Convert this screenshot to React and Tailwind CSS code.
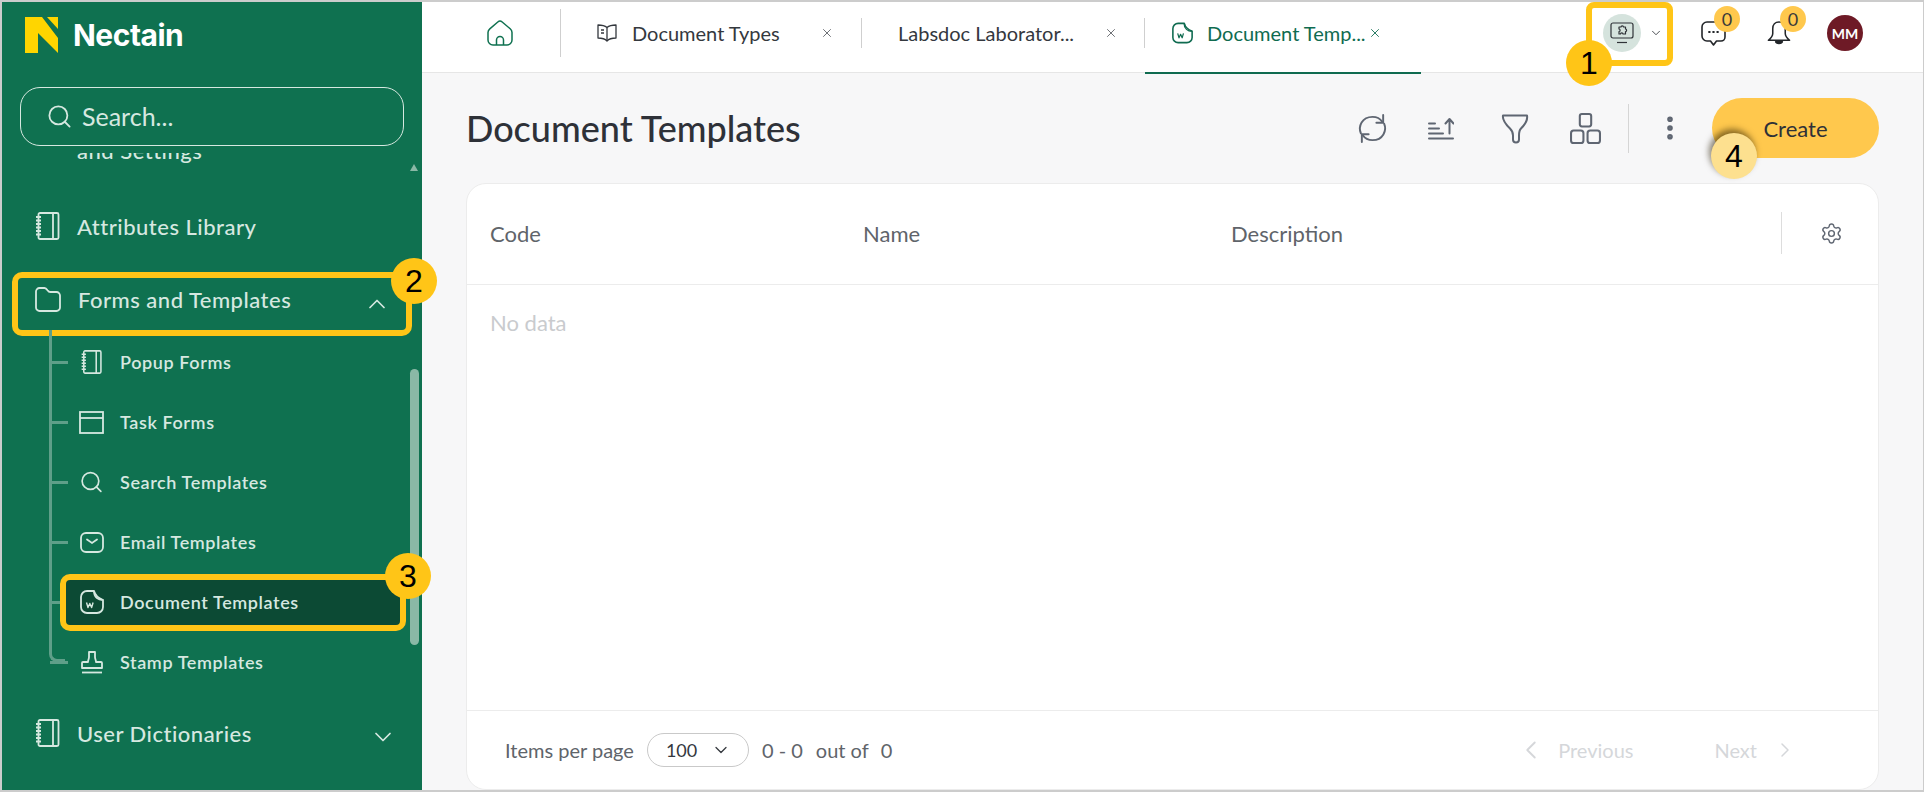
import React from 'react';
import { ChevronDown, ChevronUp, ChevronLeft, ChevronRight, X, Search, EllipsisVertical, Settings } from 'lucide-react';

const NotebookIcon = ({ className }) => (
  <svg className={className} viewBox="0 0 25 28" fill="none" stroke="currentColor" strokeWidth="1.8" strokeLinejoin="round">
    <rect x="3.5" y="1" width="20" height="26" rx="1.5" />
    <path d="M18 1v26" />
    <path d="M1 5h5M1 8.500h5M1 12h5M1 15.500h5M1 19h5M1 22.500h5" />
  </svg>
);

const FolderIcon = ({ className }) => (
  <svg className={className} viewBox="0 0 26 26" fill="none" stroke="currentColor" strokeWidth="1.8" strokeLinejoin="round">
    <path d="M1 5.500A3.500 3.500 0 0 1 4.500 2h5c1.500 0 2.200 1 3 2.200.7 1 1.300 1.800 2.800 1.800h6.200A3.500 3.500 0 0 1 25 9.500v12a3.500 3.500 0 0 1-3.500 3.500h-17A3.500 3.500 0 0 1 1 21.500z" />
  </svg>
);

const WindowIcon = ({ className }) => (
  <svg className={className} viewBox="0 0 25 23" fill="none" stroke="currentColor" strokeWidth="1.8">
    <rect x="1" y="1" width="23" height="21" />
    <path d="M1 7h23" />
  </svg>
);

const MailIcon = ({ className }) => (
  <svg className={className} viewBox="0 0 24 21" fill="none" stroke="currentColor" strokeWidth="1.8" strokeLinecap="round">
    <rect x="1" y="1" width="22" height="19" rx="5" />
    <path d="M7 7.500l5 3.500 5-3.500" />
  </svg>
);

const DocWordIcon = ({ className }) => (
  <svg className={className} viewBox="0 0 24 24" fill="none" stroke="currentColor" strokeWidth="1.8" strokeLinejoin="round">
    <path d="M14 1H7a6 6 0 0 0-6 6v10a6 6 0 0 0 6 6h10a6 6 0 0 0 6-6v-7c-5 0-9-3-9-9z" />
    <path d="M14 1c1 4 4 7 9 9" />
    <path d="M6.500 12.500l1.500 5 1.800-4 1.800 4 1.500-5" strokeWidth="1.400" />
  </svg>
);

const StampIcon = ({ className }) => (
  <svg className={className} viewBox="0 0 22 23" fill="none" stroke="currentColor" strokeWidth="1.8" strokeLinejoin="round">
    <path d="M8 1h6v5c0 2 1 3 1 5h5a1 1 0 0 1 1 1v5H1v-5a1 1 0 0 1 1-1h5c0-2 1-3 1-5z" />
    <path d="M1 21.500h20" />
  </svg>
);

const HomeIcon = ({ className }) => (
  <svg className={className} viewBox="0 0 26 26" fill="none" stroke="currentColor" strokeWidth="1.500" strokeLinejoin="round">
    <path d="M1 12.500c0-1.500.6-2.700 1.800-3.700l8-6.800a3.400 3.400 0 0 1 4.400 0l8 6.800c1.200 1 1.800 2.200 1.800 3.700V20a5 5 0 0 1-5 5H6a5 5 0 0 1-5-5z" />
    <path d="M9.500 25v-5a3.500 3.500 0 0 1 7 0v5" />
  </svg>
);

const BookIcon = ({ className }) => (
  <svg className={className} viewBox="0 0 20 18" fill="none" stroke="currentColor" strokeWidth="1.300" strokeLinejoin="round">
    <path d="M10 3.500C8 1.800 4.500 1 1 1v13c3.500 0 7 .8 9 3 2-2.200 5.500-3 9-3V1c-3.500 0-7 .8-9 2.500z" />
    <path d="M10 3.500V17M4 6h3M4 9h3" />
  </svg>
);

const DesktopPluginIcon = ({ className }) => (
  <svg className={className} viewBox="0 0 24 22" fill="none" stroke="currentColor" strokeWidth="1.200" strokeLinejoin="round">
    <rect x="1" y="1" width="22" height="15" rx="2" />
    <path d="M7 20.500h10" />
    <path d="M9 5h2c0-1.500 2.500-1.500 2.500 0h2v2c1.500 0 1.500 2.500 0 2.500v2.500h-2.500c0-1.500-2.500-1.500-2.500 0H9V9.500c1.500 0 1.500-2.500 0-2.500z" />
  </svg>
);

const ChatIcon = ({ className }) => (
  <svg className={className} viewBox="0 0 25 25" fill="none" stroke="currentColor" strokeWidth="1.600" strokeLinejoin="round">
    <path d="M6 1h13a5 5 0 0 1 5 5v10a4 4 0 0 1-4 4h-4.500l-3 4-3-4H6a5 5 0 0 1-5-5V6a5 5 0 0 1 5-5z" />
    <path d="M8 11h.8M12.100 11h.8M16.200 11h.8" strokeWidth="1.800" strokeLinecap="round" />
  </svg>
);

const BellIcon = ({ className }) => (
  <svg className={className} viewBox="0 0 24 26" fill="none" stroke="currentColor" strokeWidth="1.600" strokeLinejoin="round">
    <path d="M12 1c-4 0-6.500 3-6.500 7v5c0 2.500-1.500 4.500-4.500 7h22c-3-2.500-4.500-4.500-4.500-7V8c0-4-2.500-7-6.500-7z" />
    <path d="M8.500 21.500c.5 2.500 6.500 2.500 7 0z" fill="currentColor" />
  </svg>
);

const RefreshIcon = ({ className }) => (
  <svg className={className} viewBox="0 0 32 32" fill="none" stroke="currentColor" strokeWidth="2" strokeLinecap="round" strokeLinejoin="round">
    <path d="M4 21C1 14 5 4 16 4c4 0 8 2 10 5" />
    <path d="M28 11c3 7-1 17-12 17-4 0-8-2-10-5" />
    <path d="M27 2v8h-7M5 30v-8h7" />
  </svg>
);

const SortIcon = ({ className }) => (
  <svg className={className} viewBox="0 0 26 22" fill="none" stroke="currentColor" strokeWidth="2" strokeLinecap="round" strokeLinejoin="round">
    <path d="M1 6h6M1 11h10M1 16h14M1 21h24" />
    <path d="M21.500 16V2M17.500 6l4-4.500 4 4.500" />
  </svg>
);

const FunnelIcon = ({ className }) => (
  <svg className={className} viewBox="0 0 28 30" fill="none" stroke="currentColor" strokeWidth="2" strokeLinejoin="round">
    <path d="M2 2h24c1 5-3 10-6 13-2 2-2 4-2 7v4c0 4-6 4-6 0v-4c0-3-1-5-3-7C6 12 1 7 2 2z" />
    <path d="M4 7h20" strokeWidth="0" />
  </svg>
);

const BlocksIcon = ({ className }) => (
  <svg className={className} viewBox="0 0 30 30" fill="none" stroke="currentColor" strokeWidth="2">
    <rect x="9.500" y="1" width="11" height="12" rx="2" />
    <rect x="1" y="17" width="12" height="12" rx="2.500" />
    <rect x="17" y="17" width="12" height="12" rx="2.500" />
  </svg>
);

const Marker = ({ n, className }) => (
  <span className={`absolute flex items-center justify-center w-[46px] h-[46px] rounded-full bg-[#ffc517] text-black text-[32px] font-['Liberation_Sans',sans-serif] ${className}`}>
    {n}
  </span>
);

const childRows = [
  { label: 'Popup Forms', icon: <NotebookIcon className="w-[23px] h-[24px]" /> },
  { label: 'Task Forms', icon: <WindowIcon className="w-[25px] h-[23px]" /> },
  { label: 'Search Templates', icon: <Search className="w-[26px] h-[26px]" strokeWidth={1.6} /> },
  { label: 'Email Templates', icon: <MailIcon className="w-[24px] h-[21px]" /> },
  { label: 'Document Templates', icon: <DocWordIcon className="w-[24px] h-[24px]" />, active: true },
  { label: 'Stamp Templates', icon: <StampIcon className="w-[22px] h-[23px]" /> },
];

const Tab = ({ icon, label, width, active }) => (
  <div className={`flex items-center h-full ${width}`}>
    {icon}
    <span className={`text-[20px] whitespace-nowrap ${active ? 'text-[#0f6b50]' : 'text-[#34383e]'}`}>{label}</span>
  </div>
);

export default function App() {
  return (
    <div className="relative flex w-[1924px] h-[792px] overflow-hidden border-t-2 border-l-2 border-b-2 border-r border-[#cccccc] bg-[#f7f7f8] font-['Lato',sans-serif]">
      {/* sidebar */}
      <aside className="relative flex flex-col w-[420px] shrink-0 bg-[#0f7150] text-[#d6e8e0]">
        <div className="flex items-center h-[51px] pl-[23px] pt-[15px] shrink-0">
          <svg className="w-[33px] h-[36px]" viewBox="0 0 33 36" fill="#ffd500">
            <path d="M0 0h17l16 21v15L13 16v20H0z" />
            <path d="M22 0h11v12z" />
          </svg>
          <span className="ml-[15px] text-[30px] font-bold tracking-[-0.5px] text-white font-['Inter',sans-serif]">Nectain</span>
        </div>
        <div className="flex items-center h-[59px] mt-[34px] mx-[18px] pl-[25px] rounded-[20px] border border-[#d6e8e0] shrink-0">
          <Search className="w-[27px] h-[27px]" strokeWidth={1.6} />
          <span className="ml-[9px] text-[25px]">Search...</span>
        </div>

        <div className="flex-1 mt-[7px] overflow-hidden">
          <div className="h-[43px] pl-[75px] overflow-hidden">
            <div className="-mt-[19px] text-[22px] font-medium tracking-[0.5px]">and Settings</div>
          </div>
          <div className="flex items-center h-[60px] pl-[33px]">
            <NotebookIcon className="w-[25px] h-[28px]" />
            <span className="ml-[17px] text-[22px] font-medium tracking-[0.5px]">Attributes Library</span>
          </div>

          <div className="flex items-center h-[64px] mt-[16px] mx-[10px] pl-[17px] pr-[15px] pb-[10px] rounded-[10px] border-[6px] border-[#ffc517]">
            <FolderIcon className="w-[26px] h-[26px]" />
            <span className="ml-[17px] text-[22px] font-medium tracking-[0.5px]">Forms and Templates</span>
            <ChevronUp className="ml-auto mt-[10px] w-[28px] h-[28px]" strokeWidth={1.5} />
          </div>

          <div className="relative -mt-[4px] pl-[47px]">
            <span className="absolute left-[47px] -top-[2px] w-[16px] h-[332px] border-l-[3px] border-b-[3px] rounded-bl-[8px] border-[#5f9f89]" />
            {childRows.map((row) => (
              <div key={row.label} className="flex items-center h-[60px]">
                <span className="w-[18px] h-[3px] ml-[1px] bg-[#5f9f89]" />
                {row.active ? (
                  <div className="flex items-center w-[346px] h-[57px] -ml-[8px] pl-[13px] rounded-[10px] border-[6px] border-[#ffc517] bg-[#0c4a34]">
                    <span className="flex justify-center w-[25px]">{row.icon}</span>
                    <span className="ml-[16px] text-[18px] font-semibold tracking-[0.6px]">{row.label}</span>
                  </div>
                ) : (
                  <>
                    <span className="flex justify-center w-[25px] ml-[11px]">{row.icon}</span>
                    <span className="ml-[16px] text-[18px] font-semibold tracking-[0.6px]">{row.label}</span>
                  </>
                )}
              </div>
            ))}
          </div>

          <div className="flex items-center h-[60px] mt-[11px] pl-[33px] pr-[25px]">
            <NotebookIcon className="w-[25px] h-[28px]" />
            <span className="ml-[17px] text-[22px] font-medium tracking-[0.5px]">User Dictionaries</span>
            <ChevronDown className="ml-auto mt-[8px] w-[28px] h-[28px]" strokeWidth={1.5} />
          </div>
        </div>

        {/* scrollbar */}
        <span className="absolute left-[408px] top-[162px] w-0 h-0 border-x-[4.500px] border-x-transparent border-b-[7px] border-b-[#8ab8a6]" />
        <span className="absolute left-[408px] top-[367px] w-[9px] h-[276px] rounded-full bg-[#8ab8a6]" />

        <Marker n="2" className="left-[389px] top-[256px]" />
        <Marker n="3" className="left-[383px] top-[551px]" />
      </aside>

      {/* main */}
      <main className="flex flex-col flex-1 min-w-0">
        <header className="flex items-center h-[71px] pb-[8px] pr-[60px] bg-white border-b border-[#e6e6e6] shrink-0">
          <div className="flex items-center h-[48px] w-[139px] pl-[65px] border-r border-[#cfcfcf]">
            <HomeIcon className="w-[26px] h-[26px] text-[#0f7150]" />
          </div>
          <Tab
            width="relative w-[300px] pl-[36px]"
            icon={<BookIcon className="w-[20px] h-[18px] mr-[15px] text-[#34383e]" />}
            label="Document Types"
          />
          <X className="-ml-[41px] w-[14px] h-[14px] text-[#5a5e63]" strokeWidth={1.5} />
          <span className="ml-[27px] w-px h-[30px] bg-[#cfcfcf]" />
          <Tab width="w-[282px] pl-[36px]" label="Labsdoc Laborator..." />
          <X className="-ml-[40px] w-[14px] h-[14px] text-[#5a5e63]" strokeWidth={1.5} />
          <span className="ml-[26px] w-px h-[30px] bg-[#cfcfcf]" />
          <Tab
            width="w-[223px] pl-[27px]"
            active
            icon={<DocWordIcon className="w-[21px] h-[22px] mr-[14px] text-[#0f6b50]" />}
            label="Document Temp..."
          />
          <X className="w-[14px] h-[14px] text-[#0f6b50]" strokeWidth={1.5} />

          <div className="flex items-center ml-auto">
            <span className="flex items-center justify-center w-[38px] h-[38px] rounded-full bg-[#d5e3dd]">
              <DesktopPluginIcon className="w-[24px] h-[22px] text-[#2f3338]" />
            </span>
            <ChevronDown className="ml-[8px] w-[14px] h-[14px] text-[#34383e]" strokeWidth={1.5} />
            <ChatIcon className="ml-[38px] w-[25px] h-[25px] text-[#23262a]" />
            <BellIcon className="ml-[41px] w-[24px] h-[25px] text-[#23262a]" />
            <span className="flex items-center justify-center ml-[36px] w-[36px] h-[36px] rounded-full bg-[#6e1a26] text-white text-[14px] font-bold">MM</span>
          </div>
        </header>

        <div className="flex flex-col flex-1 min-h-0 px-[44px]">
          <div className="flex items-center h-[60px] mt-[25px] shrink-0">
            <h1 className="text-[36px] font-medium text-[#2e3138]">Document Templates</h1>
            <div className="flex items-center ml-auto text-[#5f6672]">
              <RefreshIcon className="w-[31px] h-[31px]" />
              <SortIcon className="ml-[40px] w-[26px] h-[23px]" />
              <FunnelIcon className="ml-[47px] w-[28px] h-[31px]" />
              <BlocksIcon className="ml-[41px] w-[31px] h-[31px]" />
              <span className="ml-[27px] w-px h-[49px] bg-[#d5d5d5]" />
              <EllipsisVertical className="ml-[26px] w-[30px] h-[30px]" strokeWidth={2.5} />
              <button className="ml-[27px] w-[167px] h-[60px] rounded-full bg-[#ffc84d] text-[#2e3138] text-[22px]">Create</button>
            </div>
          </div>

          <section className="flex flex-col flex-1 min-h-0 mt-[25px] rounded-[20px] border border-[#ececec] bg-white">
            <div className="flex items-center h-[101px] pb-[2px] border-b border-[#ececec] text-[22px] text-[#60646a] shrink-0">
              <span className="w-[373px] pl-[23px]">Code</span>
              <span className="w-[391px] pl-[23px] -ml-[0px]">Name</span>
              <span className="pl-[0px]">Description</span>
              <span className="ml-auto w-px h-[42px] bg-[#dddddd]" />
              <Settings className="ml-[38px] mr-[35px] w-[23px] h-[23px] text-[#5f6672]" strokeWidth={1.5} />
            </div>
            <div className="flex-1 pl-[23px] pt-[21px] text-[22px] text-[#c9cbce]">No data</div>
            <div className="flex items-center h-[79px] pl-[38px] pr-[81px] border-t border-[#ececec] text-[#60646a] text-[20px] shrink-0">
              <span>Items per page</span>
              <div className="flex items-center w-[102px] h-[34px] ml-[13px] pl-[18px] rounded-full border border-[#c9c9c9] text-[#34383e] text-[18px]">
                100
                <ChevronDown className="ml-[14px] w-[20px] h-[20px]" strokeWidth={1.5} />
              </div>
              <span className="ml-[13px]">0 - 0</span>
              <span className="ml-[13px]">out of</span>
              <span className="ml-[12px]">0</span>
              <div className="flex items-center ml-auto text-[#d5d7da]">
                <ChevronLeft className="w-[30px] h-[30px]" strokeWidth={1.5} />
                <span className="ml-[12px]">Previous</span>
                <span className="ml-[81px]">Next</span>
                <ChevronRight className="ml-[16px] w-[24px] h-[24px]" strokeWidth={1.5} />
              </div>
            </div>
          </section>
        </div>
      </main>

      {/* annotations */}
      <span className="absolute left-[1584px] top-0 w-[87px] h-[64px] rounded-[8px] border-[6px] border-[#ffc517]" />
      <Marker n="1" className="left-[1564px] top-[38px]" />
      <span className="absolute left-[1710px] -top-px" />
      <span className="absolute left-[1712px] top-[4px] flex items-center justify-center w-[26px] h-[26px] rounded-full bg-[#ffc84d] text-[#3a3a3a] text-[18px]">0</span>
      <span className="absolute left-[1778px] top-[4px] flex items-center justify-center w-[26px] h-[26px] rounded-full bg-[#ffc84d] text-[#3a3a3a] text-[18px]">0</span>
      <span className="absolute left-[1143px] top-[70px] w-[276px] h-[2px] bg-[#0f6b50]" />
      <Marker n="4" className="left-[1709px] top-[131px] !bg-[#fde08f] shadow-[-2px_-4px_6px_rgba(40,30,0,0.55)]" />
    </div>
  );
}
